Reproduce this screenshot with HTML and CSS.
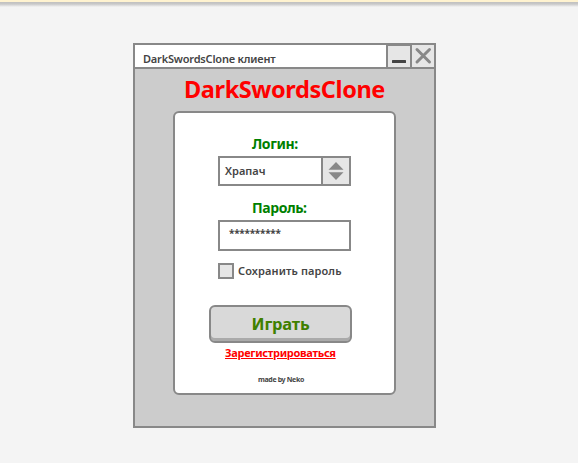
FILE: index.html
```
<!DOCTYPE html>
<html lang="ru">
<head>
<meta charset="utf-8">
<title>DarkSwordsClone клиент</title>
<link rel="stylesheet" href="styles.css">
</head>
<body>
<div class="topbar"></div>
<main class="window">
  <header class="titlebar">
    <span class="caption">DarkSwordsClone клиент</span>
    <button class="control minimize" aria-label="Свернуть"><svg width="22" height="21" viewBox="0 0 22 21"><rect x="4" y="14" width="14" height="3" rx=".5" fill="#444"/></svg></button>
    <button class="control" aria-label="Закрыть"><svg width="22" height="22" viewBox="0 0 22 22"><path d="M5 4.500 17.500 17M17.500 4.500 5 17" stroke="#888" stroke-width="3" stroke-linecap="round"/></svg></button>
  </header>
  <h1 class="brand">DarkSwordsClone</h1>
  <form class="card">
    <div class="label login">Логин:</div>
    <div class="select">
      <span class="value">Храпач</span>
      <span class="arrows"><svg width="26" height="26" viewBox="0 0 26 26"><path d="M13 4 20.500 11.800H5.500ZM5.500 14.200H20.500L13 22Z" fill="#888"/></svg></span>
    </div>
    <div class="label password">Пароль:</div>
    <div class="field"><span class="stars">**********</span></div>
    <label class="remember"><span class="box"></span><span class="remember-text">Сохранить пароль</span></label>
    <button class="play" type="button"><span>Играть</span></button>
    <a class="register"><span>Зарегистрироваться</span></a>
    <div class="credit">made by Neko</div>
  </form>
</main>
</body>
</html>
```
FILE: styles.css
```
* { box-sizing: border-box; }
body {
  margin: 0;
  height: 463px;
  overflow: hidden;
  background: #f4f4f4;
  color: #444;
  font-family: "Noto Sans", "Open Sans", sans-serif;
}
svg { display: block; fill: none; }
button { margin: 0; padding: 0; font-family: inherit; }
.topbar {
  height: 7px;
  background: linear-gradient(#fff3d0 2px, #c0c0c0 2px, #c8c8c8 4px, #f4f4f4 7px);
}
.window {
  width: 303px;
  height: 385px;
  margin: 36px 0 0 133px;
  border: 2px solid #888;
  background: #ccc;
}
.titlebar {
  display: flex;
  height: 24px;
  border-bottom: 2px solid #888;
  background: #fff;
}
.caption {
  flex: 1;
  padding: 5px 0 0 8px;
  font-size: 11px;
  font-weight: 600;
  line-height: 17px;
  letter-spacing: -0.2px;
  white-space: nowrap;
}
.control {
  width: 24px;
  height: 22px;
  border: 0;
  border-left: 2px solid #888;
  background: #e6e6e6;
}
.minimize { border-top: 1px solid #888; }
.brand {
  height: 42px;
  margin: 0;
  padding-top: 3px;
  color: red;
  font-size: 23.5px;
  line-height: 34px;
  letter-spacing: -0.4px;
  text-align: center;
}
.card {
  display: flex;
  flex-direction: column;
  width: 223px;
  height: 284px;
  margin-left: 38px;
  border: 2px solid #888;
  border-radius: 6px;
  background: #fff;
}
.label {
  color: #008000;
  font-size: 14px;
  font-weight: 700;
  line-height: 20px;
  letter-spacing: -0.4px;
  padding-left: 77px;
  white-space: nowrap;
}
.login { height: 43px; padding-top: 21px; }
.password { height: 34px; padding-top: 12px; }
.select, .field {
  display: flex;
  width: 133px;
  height: 30px;
  margin-left: 43px;
  border: 2px solid #888;
  background: #fff;
}
.value { flex: 1; padding-left: 5px; font-size: 11px; font-weight: 600; line-height: 26px; }
.arrows { width: 28px; border-left: 2px solid #888; background: #e6e6e6; }
.field { height: 31px; }
.stars { padding: 0 0 0 9px; font-size: 10px; font-weight: 700; line-height: 23px; letter-spacing: -0.25px; }
.remember { display: flex; margin: 12px 0 0 43px; height: 16px; }
.box { width: 16px; height: 16px; border: 2px solid #888; background: #e6e6e6; }
.remember-text { margin-left: 4px; font-size: 11px; font-weight: 600; line-height: 16px; letter-spacing: 0.12px; white-space: nowrap; }
.play {
  width: 143px;
  height: 38px;
  margin: 26px 0 0 34px;
  border: 2px solid #888;
  border-radius: 6px;
  background: #d9d9d9;
  box-shadow: inset 0 -3px #aaa;
  color: #408000;
  font-size: 16.5px;
  font-weight: 700;
  line-height: 34px;
  letter-spacing: -0.2px;
}
.register {
  height: 20px;
  padding-left: 50px;
  color: red;
  font-size: 11px;
  font-weight: 700;
  line-height: 20px;
  letter-spacing: -0.3px;
  text-decoration: underline;
  white-space: nowrap;
}
.credit {
  padding: 12px 0 0 83px;
  font-size: 7px;
  font-weight: 700;
  line-height: 10px;
  letter-spacing: -0.35px;
  white-space: nowrap;
}
```
